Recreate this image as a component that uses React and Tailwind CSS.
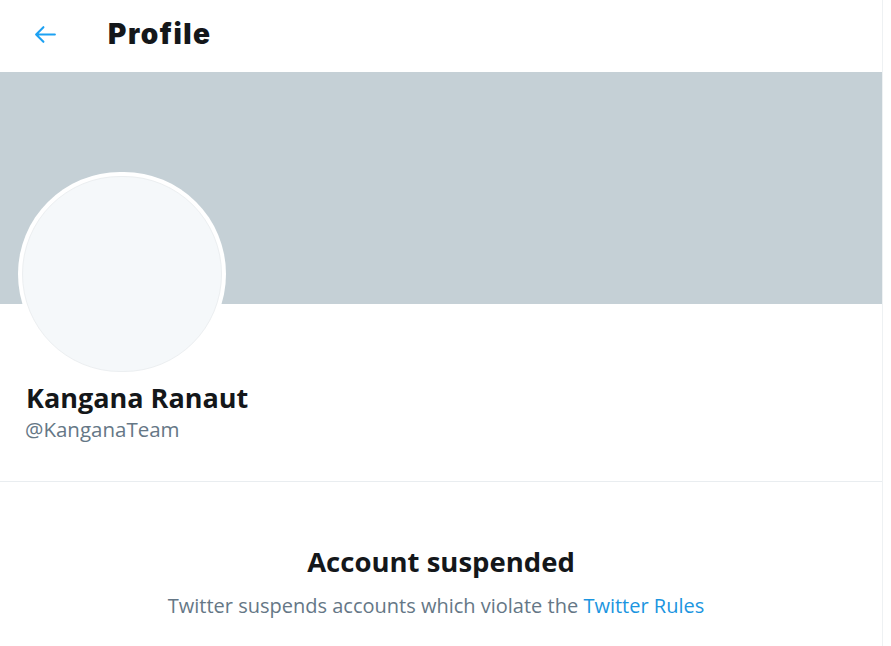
import React from "react";

export default function App() {
  return (
    <div className="w-[891px] h-[646px] bg-white overflow-hidden" style={{ fontFamily: '"Open Sans", "Noto Sans", sans-serif' }}>
      <div className="w-[883px] h-full border-r border-[#eef1f3] flex flex-col">
        <div className="h-[72px] flex items-center pb-[4px] shrink-0">
          <svg className="ml-[33px] w-[25px] h-[25px]" viewBox="0 0 24 24" fill="none" stroke="#1da1f2" strokeWidth="2" strokeLinecap="round" strokeLinejoin="round">
            <path d="M21 12H3.5M10 5l-7 7 7 7" />
          </svg>
          <div className="ml-[50px] text-[28px] leading-[32px] font-black tracking-[1.5px] text-[#14171a]" style={{ fontFamily: 'Inter, "Open Sans", sans-serif' }}>Profile</div>
        </div>
        <div className="h-[232px] bg-[#c5d0d6] shrink-0" />
        <div className="px-[18px] shrink-0">
          <div className="-mt-[132px] w-[208px] h-[204px] rounded-full bg-white p-[4px]">
            <div className="w-full h-full rounded-full bg-[#f5f8fa] border border-[#eceff1]" />
          </div>
          <div className="mt-[7px] pl-[8px] text-[27px] leading-[30px] font-bold text-[#14171a]">Kangana Ranaut</div>
          <div className="mt-[5px] pl-[7px] text-[20.5px] leading-[22px] text-[#657786]">@KanganaTeam</div>
        </div>
        <div className="mt-[41px] border-t border-[#e9edf0]" />
        <div className="flex flex-col items-center mt-[62px]">
          <div className="text-[27.5px] leading-[36px] font-bold text-[#14171a]">Account suspended</div>
          <div className="mt-[13px] pr-[10px] text-[20px] leading-[26px] text-[#657786]">
            Twitter suspends accounts which violate the <span className="text-[#1b95e0]">Twitter Rules</span>
          </div>
        </div>
      </div>
    </div>
  );
}
